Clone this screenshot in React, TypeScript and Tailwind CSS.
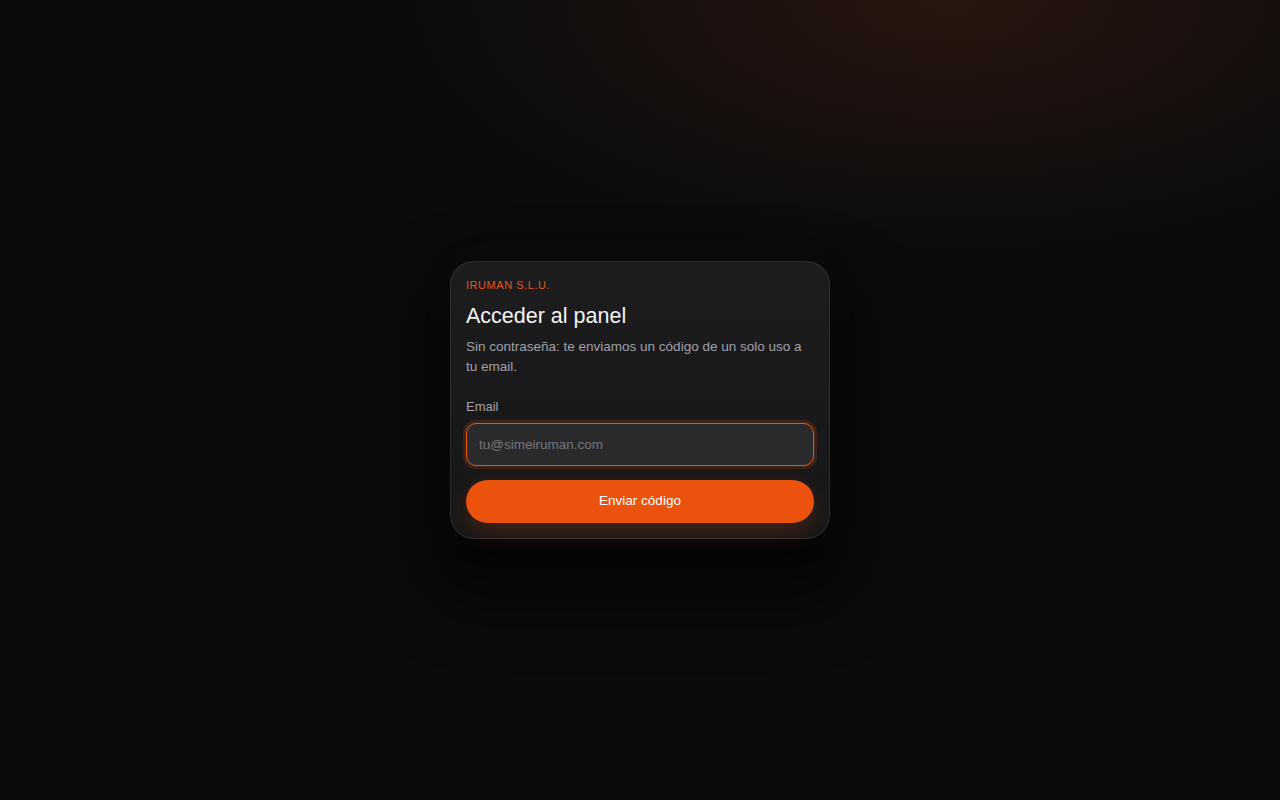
export default function App() {
  return (
    <div
      className="flex min-h-screen w-full items-center justify-center bg-[#0a0b0d] bg-[radial-gradient(ellipse_560px_260px_at_950px_0px,rgba(110,45,20,0.3),transparent)] font-['Liberation_Sans',Arial,sans-serif]"
    >
      <div className="w-[380px] rounded-[24px] border border-white/[0.09] bg-[linear-gradient(180deg,#1d1d20,#161618)] p-[15px] shadow-[0_40px_60px_24px_rgba(0,0,0,0.5),0_0_40px_rgba(234,88,12,0.05)]">
        <p className="text-[11px] leading-4 tracking-[0.05em] text-[#e2571c]">IRUMAN S.L.U.</p>
        <h1 className="mt-[9px] text-[21.5px] leading-7 text-[#f4f4f5]">Acceder al panel</h1>
        <p className="mt-[7px] text-[13.5px] leading-5 text-[#a1a1aa]">
          Sin contraseña: te enviamos un código de un solo uso a tu email.
        </p>
        <label className="mt-5 block text-[13px] leading-5 text-[#a1a1aa]">Email</label>
        <input
          type="email"
          placeholder="tu@simeiruman.com"
          className="mt-[6px] h-[43px] w-full rounded-[10px] border border-[#ea580c] bg-[#2a2a2d] px-3 text-[13.5px] text-white shadow-[0_0_0_3px_rgba(234,88,12,0.18)] outline-none placeholder:text-[#75757b]"
        />
        <button
          type="button"
          className="mt-[14px] h-[43px] w-full rounded-full bg-[#ea520e] text-[13.5px] text-white shadow-[0_8px_24px_rgba(234,88,12,0.22)]"
        >
          Enviar código
        </button>
      </div>
    </div>
  )
}
